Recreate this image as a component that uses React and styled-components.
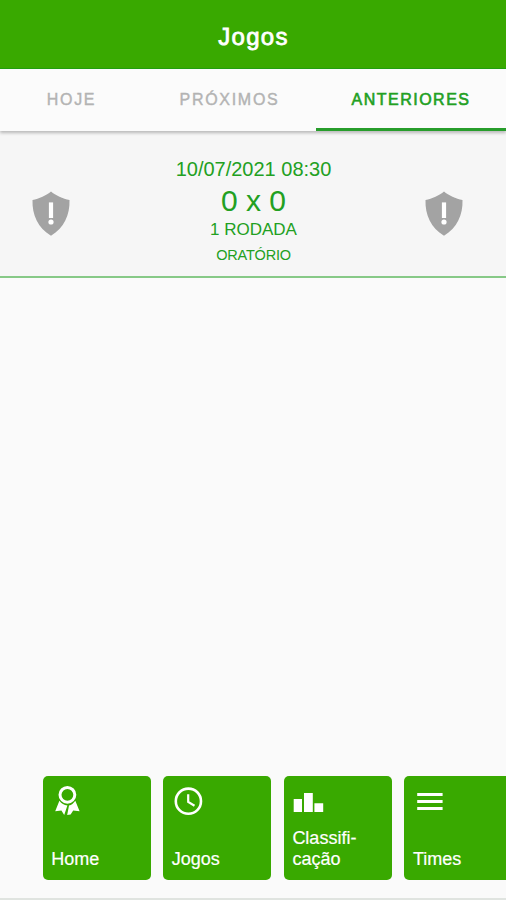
import styled, { createGlobalStyle } from "styled-components"

const colors = {
    primary: '#39a900',
    text: '#22a022',
    muted: '#b3b3b3',
    shield: '#a3a3a3',
}

const tabs = [
    { label: 'HOJE', width: 143 },
    { label: 'PRÓXIMOS', width: 173 },
    { label: 'ANTERIORES', width: 190, active: true },
]

const ShieldIcon = () => (
    <svg width="38" height="46" viewBox="0 0 38 46">
        <path d="M19 0.6C14.5 4.4 7 7.8 0.5 9.1C0 24 6 37 19 44.8C32 37 38 24 37.5 9.1C31 7.8 23.5 4.4 19 0.6Z" fill={colors.shield} />
        <rect x="16.9" y="11.4" width="4.2" height="15.6" fill="#fff" />
        <circle cx="19" cy="31" r="2.6" fill="#fff" />
    </svg>
)

const RibbonIcon = () => (
    <svg width="32" height="32" viewBox="0 0 32 32">
        <circle cx="16.4" cy="9.8" r="7.4" fill="none" stroke="#fff" strokeWidth="3" />
        <path d="M8.4 15.8C10.6 18.6 13 20.2 16.4 20.6L13.2 30L10.4 25.6L4.2 26.2Z" fill="#fff" />
        <path d="M24.3 15.8C22.3 18.6 20.6 20 18 20.5L16.2 30L19.6 29.6L22.2 25.6L28.6 26.2Z" fill="#fff" />
    </svg>
)

const ClockIcon = () => (
    <svg width="32" height="32" viewBox="0 0 32 32">
        <circle cx="16.4" cy="16.2" r="12.6" fill="none" stroke="#fff" strokeWidth="2.6" />
        <path d="M16.2 9.2V17L22.5 20.8" fill="none" stroke="#fff" strokeWidth="2.2" />
    </svg>
)

const StatsIcon = () => (
    <svg width="32" height="32" viewBox="0 0 32 32">
        <path d="M1.7 14H10V27H1.7ZM12 8.1H20.8V27H12ZM22.4 18.2H31.2V27H22.4Z" fill="#fff" />
    </svg>
)

const MenuIcon = () => (
    <svg width="32" height="32" viewBox="0 0 32 32">
        <path d="M4.2 8H29.6V11H4.2ZM4.2 14.9H29.6V18.1H4.2ZM4.2 21.9H29.6V25H4.2Z" fill="#fff" />
    </svg>
)

const shortcuts = [
    { lines: ['Home'], Icon: RibbonIcon },
    { lines: ['Jogos'], Icon: ClockIcon },
    { lines: ['Classifi-', 'cação'], Icon: StatsIcon },
    { lines: ['Times'], Icon: MenuIcon },
]

const App = () => {
    return (
        <>
            <GlobalStyle />
            <Screen>
                <Header>Jogos</Header>

                <Tabs>
                    {tabs.map(({ label, width, active }) => (
                        <Tab key={label} $width={width} $active={active}>{label}</Tab>
                    ))}
                </Tabs>

                <Match>
                    <ShieldIcon />
                    <MatchInfo>
                        <MatchDate>10/07/2021 08:30</MatchDate>
                        <Score>0 x 0</Score>
                        <Round>1 RODADA</Round>
                        <Place>ORATÓRIO</Place>
                    </MatchInfo>
                    <ShieldIcon />
                </Match>

                <Shortcuts>
                    {shortcuts.map(({ lines, Icon }) => (
                        <Shortcut key={lines[0]}>
                            <Icon />
                            <ShortcutLabel>
                                {lines.map(line => <div key={line}>{line}</div>)}
                            </ShortcutLabel>
                        </Shortcut>
                    ))}
                </Shortcuts>
            </Screen>
        </>
    )
}

export default App

const GlobalStyle = createGlobalStyle`
    * {
        box-sizing: border-box;
    }

    body {
        margin: 0;
        font-family: 'Liberation Sans', Arial, sans-serif;
    }
`

const Screen = styled.div`
    display: flex;
    flex-direction: column;
    width: 506px;
    height: 900px;
    overflow: hidden;
    background: #fafafa;
`

const Header = styled.header`
    display: flex;
    align-items: center;
    justify-content: center;
    flex: none;
    height: 69px;
    padding: 6px 0 0 1px;
    background: ${colors.primary};
    border-bottom: 1px solid #22a010;
    color: white;
    font-size: 24px;
    letter-spacing: 1.3px;
    -webkit-text-stroke: 0.8px;
`

const Tabs = styled.nav`
    display: flex;
    flex: none;
    height: 62px;
    background: #fbfbfb;
    box-shadow: 0 2px 3px rgba(0, 0, 0, 0.25);
    z-index: 1;
`

const Tab = styled.div`
    width: ${props => props.$width}px;
    height: 62px;
    line-height: 61px;
    text-align: center;
    font-size: 16px;
    letter-spacing: ${props => props.$active ? 1.5 : 1.7}px;
    color: ${props => props.$active ? colors.text : colors.muted};
    -webkit-text-stroke: ${props => props.$active ? 0.6 : 0.4}px;
    border-bottom: ${props => props.$active ? `3px solid #279d2b` : 'none'};
`

const Match = styled.div`
    display: flex;
    justify-content: space-between;
    align-items: center;
    flex: none;
    height: 147px;
    padding: 20px 43px 0 32px;
    background: #f6f6f6;
    border-bottom: 2px solid #87c987;
`

const MatchInfo = styled.div`
    display: flex;
    flex-direction: column;
    align-items: center;
    margin: 0 0 3px 12px;
    color: ${colors.text};
`

const MatchDate = styled.div`
    font-size: 20px;
    line-height: 28px;
`

const Score = styled.div`
    font-size: 30px;
    line-height: 36px;
`

const Round = styled.div`
    font-size: 17px;
    line-height: 22px;
`

const Place = styled.div`
    font-size: 14.5px;
    line-height: 28px;
    letter-spacing: -0.2px;
`

const Shortcuts = styled.div`
    display: flex;
    gap: 12.6px;
    margin-top: auto;
    padding: 0 0 18px 42.6px;
    border-bottom: 2px solid #e0e4e0;
`

const Shortcut = styled.div`
    display: flex;
    flex-direction: column;
    justify-content: space-between;
    flex: none;
    width: 108px;
    height: 104px;
    padding: 9px 9px 10.5px 8.6px;
    border-radius: 5px;
    background: ${colors.primary};

    svg {
        flex: none;
    }
`

const ShortcutLabel = styled.div`
    color: white;
    font-size: 18px;
    line-height: 21px;
    -webkit-text-stroke: 0.2px;
    white-space: nowrap;
`
